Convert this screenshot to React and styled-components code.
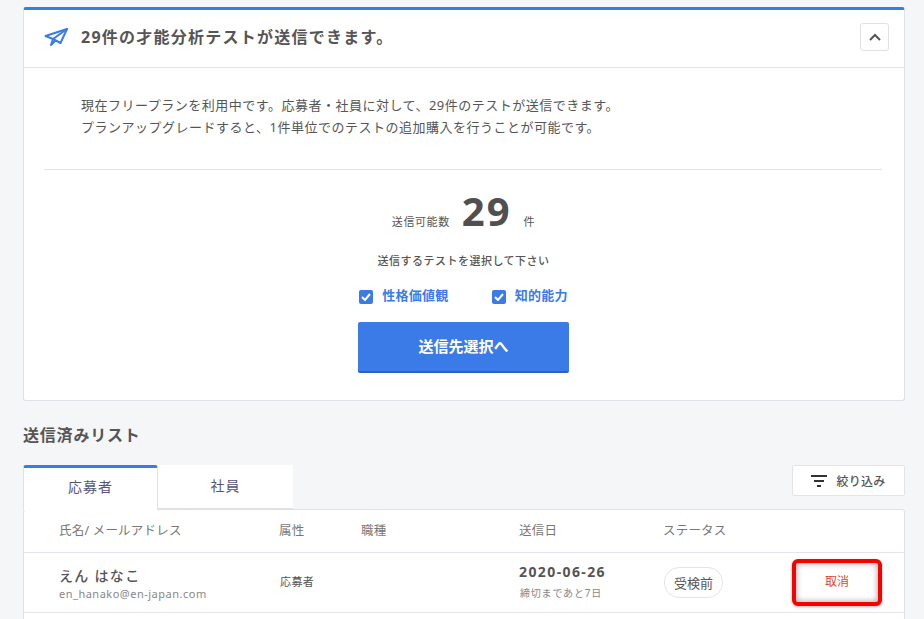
import React from "react";
import styled, { createGlobalStyle } from "styled-components";

const Global = createGlobalStyle`
  html, body { margin: 0; padding: 0; background: #f5f6f8; }
  body { font-family: "Noto Sans", "Noto Sans CJK JP", sans-serif; color: #555; overflow: hidden; height: 619px; }
  * { box-sizing: border-box; }
`;

const Page = styled.div`
  width: 924px;
  height: 619px;
  padding: 7px 19px 0 23px;
  overflow: hidden;
`;
const Card = styled.section`
  background: #fff;
  border: 1px solid #dfe1e8;
  border-top: 3px solid #3a7be8;
  border-radius: 3px;
  height: 394px;
`;
const CardHeader = styled.header`
  height: 58px;
  display: flex;
  align-items: center;
  padding: 0 15px 0 20px;
  border-bottom: 1px solid #e3e4e8;
`;
const PlaneIcon = styled.svg`
  margin-bottom: 3px;
`;
const Title = styled.h2`
  flex: 1;
  margin: 0 0 6px 13px;
  font-size: 16px;
  font-weight: 700;
  letter-spacing: 1.25px;
  color: #555;
`;
const Toggle = styled.button`
  width: 29px;
  height: 28px;
  padding: 0;
  margin-bottom: 4px;
  background: #fff;
  border: 1px solid #e0e1e8;
  border-radius: 3px;
  display: flex;
  align-items: center;
  justify-content: center;
`;
const Intro = styled.p`
  margin: 0;
  padding: 26px 0 0 57px;
  height: 101px;
  font-size: 13px;
  line-height: 22px;
  letter-spacing: 0.5px;
  color: #555;
`;
const Divider = styled.hr`
  margin: 0 22px 0 20px;
  border: 0;
  border-top: 1px solid #e3e4e8;
`;
const Center = styled.div`
  display: flex;
  flex-direction: column;
  align-items: center;
  padding-right: 1px;
`;
const CountRow = styled.div`
  display: flex;
  align-items: baseline;
  height: 56px;
  margin-top: 13px;
  font-size: 11px;
  letter-spacing: 0.6px;
  color: #555;
`;
const CountValue = styled.strong`
  font-size: 40px;
  font-weight: 700;
  line-height: 56px;
  margin: 0 12px;
  color: #505050;
  letter-spacing: 2px;
`;
const Prompt = styled.p`
  margin: 14px 0 0;
  font-size: 11px;
  line-height: 16px;
  font-weight: 500;
  letter-spacing: 0.5px;
  color: #555;
`;
const Checks = styled.div`
  display: flex;
  gap: 43px;
  margin-top: 16px;
`;
const Check = styled.label`
  display: flex;
  align-items: center;
  gap: 9px;
  font-size: 13px;
  font-weight: 700;
  letter-spacing: 0.3px;
  color: #3a7be8;
  line-height: 20px;
`;
const Box = styled.span`
  width: 14px;
  height: 14px;
  margin-top: 3px;
  border-radius: 2px;
  background: #3a7be8;
  display: flex;
  align-items: center;
  justify-content: center;
`;
const Primary = styled.button`
  margin-top: 17px;
  width: 211px;
  height: 51px;
  padding: 0 0 2px;
  border: 0;
  border-bottom: 2px solid #2c62b9;
  border-radius: 2px;
  background: #3a7be8;
  color: #fff;
  font: 700 15px "Noto Sans", "Noto Sans CJK JP", sans-serif;
`;
const SectionTitle = styled.h2`
  margin: 23px 0 0;
  height: 41px;
  font-size: 16px;
  line-height: 22px;
  font-weight: 700;
  letter-spacing: 0.8px;
  color: #555;
`;
const TabBar = styled.div`
  display: flex;
  align-items: flex-start;
  justify-content: space-between;
  height: 44px;
`;
const Tabs = styled.div`
  display: flex;
`;
const Tab = styled.div`
  width: ${p => p.$w}px;
  background: #fff;
  display: flex;
  align-items: center;
  justify-content: center;
  font-size: 14px;
  letter-spacing: 1px;
  color: #557;
  position: relative;
  z-index: 1;
  ${p => p.$active
    ? `height: 45px; padding-bottom: 6px; border-top: 3px solid #3a7be8; border-right: 1px solid #dfe1e8; border-left: 1px solid #dfe1e8; border-radius: 3px 3px 0 0;`
    : `height: 44px; padding-bottom: 3px; border-bottom: 1px solid #dfe1e8;`}
`;
const FilterButton = styled.button`
  width: 113px;
  height: 31px;
  background: #fff;
  border: 1px solid #e3e4e8;
  border-radius: 2px;
  display: flex;
  align-items: center;
  justify-content: center;
  gap: 9px;
  padding: 0;
  font: 500 12px "Noto Sans", "Noto Sans CJK JP", sans-serif;
  letter-spacing: 0.3px;
  color: #555;
`;
const Table = styled.div`
  background: #fff;
  border: 1px solid #dfe1e8;
  border-radius: 3px 3px 0 0;
`;
const Row = styled.div`
  display: grid;
  grid-template-columns: 220px 82px 158px 144px 1fr;
  padding-left: 35px;
  align-items: center;
  height: ${p => p.$h}px;
  border-bottom: 1px solid #e3e4ec;
`;
const HeadCell = styled.div`
  font-size: 12.5px;
  letter-spacing: 0.2px;
  padding-bottom: 4px;
  color: #777;
`;
const Name = styled.div`
  margin-top: 2px;
  font-size: 14px;
  font-weight: 500;
  line-height: 20px;
  letter-spacing: 1.3px;
  color: #555;
`;
const Email = styled.div`
  font-size: 11px;
  line-height: 15px;
  letter-spacing: 0.5px;
  color: #888;
`;
const Attr = styled.div`
  font-size: 11px;
  letter-spacing: 0.4px;
  padding: 0 0 4px 1px;
  color: #555;
`;
const DateText = styled.div`
  font-size: 14px;
  font-weight: 700;
  line-height: 20px;
  letter-spacing: 1.4px;
  color: #555;
`;
const Deadline = styled.div`
  margin: 4px 0 3px 1px;
  font-size: 10px;
  line-height: 15px;
  letter-spacing: 0.8px;
  color: #888;
`;
const StatusCell = styled.div`
  display: flex;
  align-items: center;
  justify-content: space-between;
  padding-right: 22px;
`;
const Status = styled.span`
  display: inline-flex;
  align-items: center;
  justify-content: center;
  width: 59px;
  height: 31px;
  margin-left: 1px;
  border: 1px solid #e3e4ec;
  border-radius: 15px;
  font-size: 13px;
  color: #555;
`;
const CancelButton = styled.button`
  width: 90px;
  height: 47px;
  background: #fff;
  border: 4px solid #f60000;
  border-radius: 6px;
  box-shadow: inset 0 0 6px rgba(0,0,0,.4), 0 1px 3px rgba(0,0,0,.3);
  font: 400 12px "Noto Sans", "Noto Sans CJK JP", sans-serif;
  color: #e0452f;
  padding: 0 0 3px;
`;

const Plane = () => (
  <PlaneIcon width="24" height="20" viewBox="0 0 24 20" fill="none" stroke="#3a7be8" strokeWidth="2" strokeLinejoin="round" strokeLinecap="round">
    <path d="M1.5 9 L23 2 L16.5 16 L9 12 Z" />
    <path d="M23 2 L9 12 L7 18 L11.5 13.5" />
  </PlaneIcon>
);
const Chevron = () => (
  <svg width="12" height="8" viewBox="0 0 12 8" fill="none" stroke="#555" strokeWidth="2">
    <path d="M1 7 L6 2 L11 7" />
  </svg>
);
const Tick = () => (
  <svg width="10" height="8" viewBox="0 0 10 8" fill="none" stroke="#fff" strokeWidth="2">
    <path d="M1 4 L4 7 L9 1" />
  </svg>
);
const FilterIcon = () => (
  <svg width="16" height="12" viewBox="0 0 16 12" fill="#333">
    <rect x="0" y="0" width="16" height="2" />
    <rect x="3" y="5" width="10" height="2" />
    <rect x="6" y="10" width="4" height="2" />
  </svg>
);

export default function App() {
  return (
    <Page>
      <Global />
      <Card>
        <CardHeader>
          <Plane />
          <Title>29件の才能分析テストが送信できます。</Title>
          <Toggle><Chevron /></Toggle>
        </CardHeader>
        <Intro>
          現在フリープランを利用中です。応募者・社員に対して、29件のテストが送信できます。<br />
          プランアップグレードすると、1件単位でのテストの追加購入を行うことが可能です。
        </Intro>
        <Divider />
        <Center>
          <CountRow>
            送信可能数<CountValue>29</CountValue>件
          </CountRow>
          <Prompt>送信するテストを選択して下さい</Prompt>
          <Checks>
            <Check><Box><Tick /></Box>性格価値観</Check>
            <Check><Box><Tick /></Box>知的能力</Check>
          </Checks>
          <Primary>送信先選択へ</Primary>
        </Center>
      </Card>
      <SectionTitle>送信済みリスト</SectionTitle>
      <TabBar>
        <Tabs>
          <Tab $w={135} $active>応募者</Tab>
          <Tab $w={135}>社員</Tab>
        </Tabs>
        <FilterButton><FilterIcon />絞り込み</FilterButton>
      </TabBar>
      <Table>
        <Row $h={43}>
          <HeadCell>氏名/ メールアドレス</HeadCell>
          <HeadCell>属性</HeadCell>
          <HeadCell>職種</HeadCell>
          <HeadCell>送信日</HeadCell>
          <HeadCell>ステータス</HeadCell>
        </Row>
        <Row $h={60}>
          <div>
            <Name>えん はなこ</Name>
            <Email>en_hanako@en-japan.com</Email>
          </div>
          <Attr>応募者</Attr>
          <div />
          <div>
            <DateText>2020-06-26</DateText>
            <Deadline>締切まであと7日</Deadline>
          </div>
          <StatusCell>
            <Status>受検前</Status>
            <CancelButton>取消</CancelButton>
          </StatusCell>
        </Row>
        <Row $h={60} />
      </Table>
    </Page>
  );
}
